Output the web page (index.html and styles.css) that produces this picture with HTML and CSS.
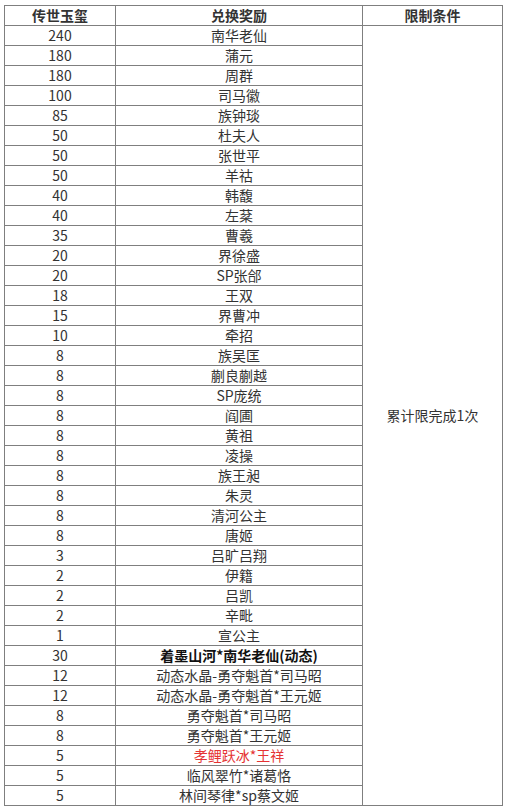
FILE: index.html
```html
<!DOCTYPE html>
<html lang="zh">
<head>
<meta charset="utf-8">
<link rel="stylesheet" href="styles.css">
</head>
<body>
<table class="tbl">
<colgroup><col class="c1"><col class="c2"><col class="c3"></colgroup>
<thead>
<tr><th>传世玉玺</th><th>兑换奖励</th><th>限制条件</th></tr>
</thead>
<tbody>
<tr><td>240</td><td>南华老仙</td><td rowspan="39" class="cond">累计限完成1次</td></tr>
<tr><td>180</td><td>蒲元</td></tr>
<tr><td>180</td><td>周群</td></tr>
<tr><td>100</td><td>司马徽</td></tr>
<tr><td>85</td><td>族钟琰</td></tr>
<tr><td>50</td><td>杜夫人</td></tr>
<tr><td>50</td><td>张世平</td></tr>
<tr><td>50</td><td>羊祜</td></tr>
<tr><td>40</td><td>韩馥</td></tr>
<tr><td>40</td><td>左棻</td></tr>
<tr><td>35</td><td>曹羲</td></tr>
<tr><td>20</td><td>界徐盛</td></tr>
<tr><td>20</td><td>SP张郃</td></tr>
<tr><td>18</td><td>王双</td></tr>
<tr><td>15</td><td>界曹冲</td></tr>
<tr><td>10</td><td>牵招</td></tr>
<tr><td>8</td><td>族吴匡</td></tr>
<tr><td>8</td><td>蒯良蒯越</td></tr>
<tr><td>8</td><td>SP庞统</td></tr>
<tr><td>8</td><td>阎圃</td></tr>
<tr><td>8</td><td>黄祖</td></tr>
<tr><td>8</td><td>凌操</td></tr>
<tr><td>8</td><td>族王昶</td></tr>
<tr><td>8</td><td>朱灵</td></tr>
<tr><td>8</td><td>清河公主</td></tr>
<tr><td>8</td><td>唐姬</td></tr>
<tr><td>3</td><td>吕旷吕翔</td></tr>
<tr><td>2</td><td>伊籍</td></tr>
<tr><td>2</td><td>吕凯</td></tr>
<tr><td>2</td><td>辛毗</td></tr>
<tr><td>1</td><td>宣公主</td></tr>
<tr><td>30</td><td class="strong">着墨山河*南华老仙(动态)</td></tr>
<tr><td>12</td><td>动态水晶-勇夺魁首*司马昭</td></tr>
<tr><td>12</td><td>动态水晶-勇夺魁首*王元姬</td></tr>
<tr><td>8</td><td>勇夺魁首*司马昭</td></tr>
<tr><td>8</td><td>勇夺魁首*王元姬</td></tr>
<tr><td>5</td><td class="red">孝鲤跃冰*王祥</td></tr>
<tr><td>5</td><td>临风翠竹*诸葛恪</td></tr>
<tr><td>5</td><td>林间琴律*sp蔡文姬</td></tr>
</tbody>
</table>
</body>
</html>
```
FILE: styles.css
```css
html, body {
  background: #ffffff;
}
body {
  margin: 0;
  padding: 5px 0 0 4px;
  font-family: "Noto Sans CJK SC", "Noto Sans", sans-serif;
  font-size: 14px;
  color: #333333;
}
.tbl {
  border-collapse: collapse;
  table-layout: fixed;
  width: 498px;
}
.c1 { width: 111px; }
.c2 { width: 247px; }
.c3 { width: 140px; }
.tbl th,
.tbl td {
  border: 1px solid #7f7f7f;
  height: 19px;
  line-height: 19px;
  padding: 0;
  text-align: center;
  vertical-align: middle;
  white-space: nowrap;
  overflow: hidden;
}
.tbl th {
  font-weight: bold;
  color: #333333;
}
.tbl .strong {
  font-weight: bold;
  color: #111111;
}
.tbl .red {
  color: #e53333;
}
.tbl .cond {
  vertical-align: middle;
}
```
